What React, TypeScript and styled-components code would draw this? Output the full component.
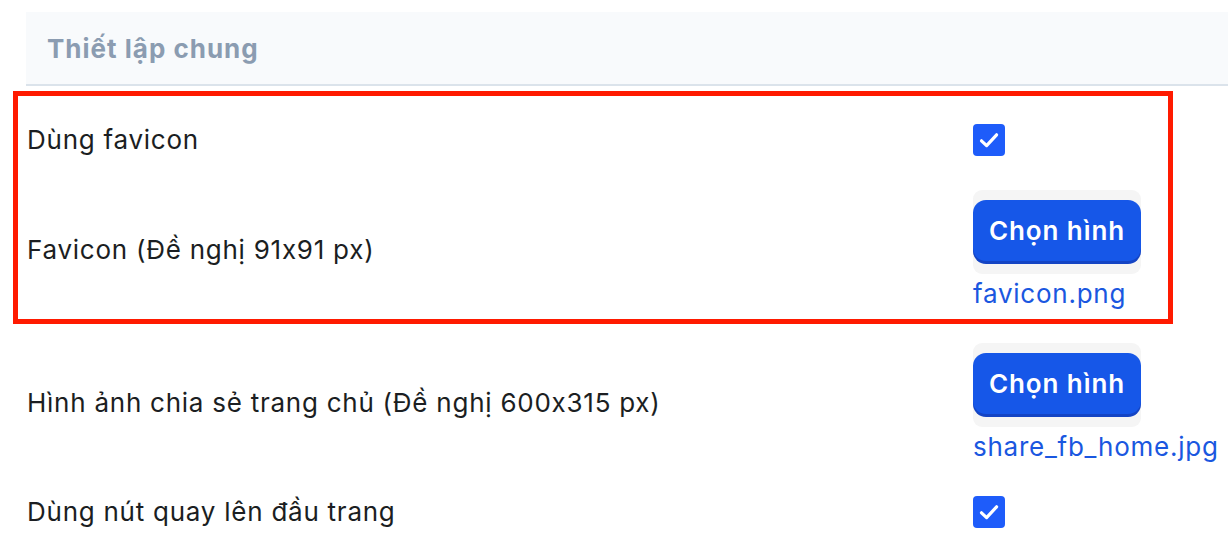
import React from 'react';
import styled, { createGlobalStyle } from 'styled-components';

const GlobalStyle = createGlobalStyle`
  html, body {
    margin: 0;
    padding: 0;
    background: #ffffff;
  }
  body {
    font-family: Inter, 'Noto Sans', 'Liberation Sans', sans-serif;
    font-feature-settings: 'calt' 0;
    color: #1b1e22;
    overflow: hidden;
  }
`;

type SettingRow = {
  label: string;
  kind: 'checkbox' | 'image';
  file?: string;
};

const highlighted: Array<SettingRow> = [
  { label: 'Dùng favicon', kind: 'checkbox' },
  { label: 'Favicon (Đề nghị 91x91 px)', kind: 'image', file: 'favicon.png' },
];

const others: Array<SettingRow> = [
  {
    label: 'Hình ảnh chia sẻ trang chủ (Đề nghị 600x315 px)',
    kind: 'image',
    file: 'share_fb_home.jpg',
  },
  { label: 'Dùng nút quay lên đầu trang', kind: 'checkbox' },
];

function CheckIcon() {
  return (
    <svg width="32" height="32" viewBox="0 0 32 32">
      <path
        d="M8.5 16.8 L13.6 21.6 L23.6 10.8"
        fill="none"
        stroke="#ffffff"
        strokeWidth="3.2"
        strokeLinecap="round"
        strokeLinejoin="round"
      />
    </svg>
  );
}

function Row({ row }: { row: SettingRow }) {
  return (
    <RowGrid>
      <Label>{row.label}</Label>
      {row.kind === 'checkbox' ? (
        <Checkbox>
          <CheckIcon />
        </Checkbox>
      ) : (
        <Picker>
          <ButtonWell>
            <PickButton type="button">Chọn hình</PickButton>
          </ButtonWell>
          <FileLink href="#">{row.file}</FileLink>
        </Picker>
      )}
    </RowGrid>
  );
}

export default function App() {
  return (
    <>
      <GlobalStyle />
      <Page>
        <Header>
          <Title>Thiết lập chung</Title>
        </Header>
        <Highlight>
          {highlighted.map((row) => (
            <Row key={row.label} row={row} />
          ))}
        </Highlight>
        {others.map((row) => (
          <Row key={row.label} row={row} />
        ))}
      </Page>
    </>
  );
}

const Page = styled.div`
  padding: 12px 0 0 26px;
  display: flex;
  flex-direction: column;
`;

const Header = styled.div`
  height: 72px;
  margin-right: -20px;
  background: #f8fafc;
  border-bottom: 2px solid #dbe3eb;
  display: flex;
  align-items: center;
  padding-left: 21px;
`;

const Title = styled.h2`
  margin: 0;
  font-size: 26px;
  font-weight: 700;
  color: #8b9cb1;
  letter-spacing: 1px;
`;

const Highlight = styled.div`
  position: relative;
  margin-top: 21px;

  &::before {
    content: '';
    position: absolute;
    left: -13px;
    top: -16px;
    bottom: 2px;
    width: 1160px;
    box-sizing: border-box;
    border: 5px solid #ff1a00;
    pointer-events: none;
  }
`;

const RowGrid = styled.div`
  display: grid;
  grid-template-columns: 947px auto;
  align-items: center;
  padding: 17px 0;
`;

const Label = styled.div`
  padding-left: 1px;
  font-size: 26px;
  line-height: 32px;
  letter-spacing: 0.75px;
  color: #1b1e22;
`;

const Checkbox = styled.div`
  width: 32px;
  height: 32px;
  border-radius: 4px;
  background: #1e5cfa;
  display: flex;
  align-items: center;
  justify-content: center;
`;

const Picker = styled.div`
  display: flex;
  flex-direction: column;
  align-items: flex-start;
`;

const ButtonWell = styled.div`
  width: 168px;
  padding: 10px 0 13px;
  background: #f5f5f5;
  border-radius: 9px;
`;

const PickButton = styled.button`
  display: block;
  width: 168px;
  height: 61px;
  border: none;
  border-radius: 13px;
  background: #1657e8;
  box-shadow: 0 3px 0 #1444c4;
  color: #ffffff;
  font-family: Inter, 'Noto Sans', 'Liberation Sans', sans-serif;
  font-size: 26px;
  font-weight: 600;
  letter-spacing: 0.9px;
  padding: 0;
  cursor: pointer;
`;

const FileLink = styled.a`
  margin-top: 4px;
  font-size: 26px;
  line-height: 31px;
  letter-spacing: 0.75px;
  color: #1a57e0;
  text-decoration: none;
`;
